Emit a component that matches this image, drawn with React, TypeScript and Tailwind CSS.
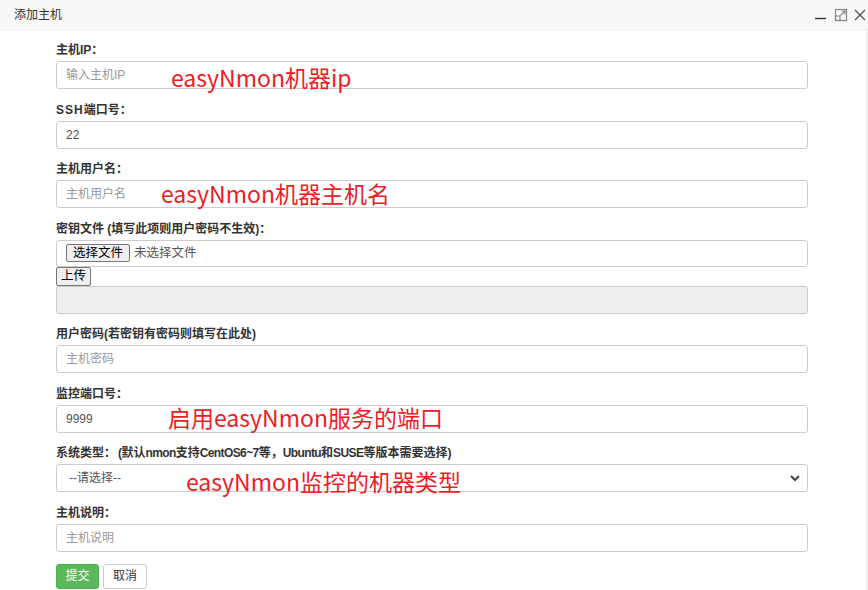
import React from "react";

const font = { fontFamily: '"Liberation Sans", "Noto Sans CJK SC", sans-serif' };
const noteFont = { fontFamily: '"Noto Sans CJK SC", sans-serif' };

function Label({ children }: { children: React.ReactNode }) {
  return (
    <div className="h-[16px] leading-[16px] mb-[3px] text-[12px] font-bold text-[#333] whitespace-nowrap">
      {children}
    </div>
  );
}

function TextInput({ placeholder, value }: { placeholder?: string; value?: string }) {
  return (
    <div className="h-[28px] w-[752px] border border-[#ccc] rounded-[3px] bg-white flex items-center pl-[9px] text-[12px]">
      {value ? (
        <span className="text-[#555]">{value}</span>
      ) : (
        <span className="text-[#999]">{placeholder}</span>
      )}
    </div>
  );
}

function Note({ children, className }: { children: React.ReactNode; className: string }) {
  return (
    <div
      className={"absolute text-[23px] leading-[28px] text-[#ee1c25] whitespace-nowrap pointer-events-none " + className}
      style={noteFont}
    >
      {children}
    </div>
  );
}

export default function App() {
  return (
    <div className="relative w-[868px] h-[590px] bg-white overflow-hidden" style={font}>
      {/* header */}
      <div className="h-[30px] bg-[#f8f8f8] border-b border-[#eee] flex items-center justify-between pl-[14px] pr-[2px]">
        <span className="text-[12px] text-[#333]">添加主机</span>
        <div className="flex items-center">
          <svg width="14" height="14" viewBox="0 0 14 14" className="mr-[6px] mt-[2px]">
            <line x1="1" y1="9.5" x2="12" y2="9.5" stroke="#333" strokeWidth="1.4" />
          </svg>
          <svg width="14" height="14" viewBox="0 0 14 14" className="mr-[6px]">
            <rect x="1.5" y="1.5" width="11" height="11" fill="none" stroke="#888" strokeWidth="1.2" />
            <rect x="1.5" y="8" width="4.5" height="4.5" fill="none" stroke="#888" strokeWidth="1.2" />
            <path d="M6.5 7.5 L11 3 M7.5 3 H11 V6.5" fill="none" stroke="#888" strokeWidth="1.2" />
          </svg>
          <svg width="12" height="14" viewBox="0 0 12 14">
            <path d="M1 2 L11 12 M11 2 L1 12" stroke="#555" strokeWidth="1.4" />
          </svg>
        </div>
      </div>

      {/* right scroll edge */}
      <div className="absolute right-0 top-[30px] bottom-0 w-[2px] bg-[#efefef]" />

      {/* form */}
      <div className="pl-[56px] pt-[12px]">
        <Label>主机IP：</Label>
        <TextInput placeholder="输入主机IP" />

        <div className="mt-[12.5px]">
          <Label>
            <span className="tracking-[1px]">SSH</span>端口号：
          </Label>
          <TextInput value="22" />
        </div>

        <div className="mt-[12.5px]">
          <Label>主机用户名：</Label>
          <TextInput placeholder="主机用户名" />
        </div>

        <div className="mt-[12.5px]">
          <Label>密钥文件 (填写此项则用户密码不生效)：</Label>
          <div className="h-[27px] w-[752px] border border-[#ccc] rounded-[3px] bg-white flex items-center pl-[9px] text-[12px]">
            <span className="h-[18px] px-[6px] border border-[#767676] rounded-[2px] bg-[#efefef] text-[#000] text-[12.5px] leading-[16px] flex items-center">
              选择文件
            </span>
            <span className="ml-[4px] text-[#555] text-[12.5px]">未选择文件</span>
          </div>
          <div className="h-[19px] w-[35px] border border-[#767676] rounded-[2px] bg-[#efefef] text-[12.5px] text-black flex items-center justify-center">
            上传
          </div>
          <div className="h-[28px] w-[752px] border border-[#ccc] rounded-[3px] bg-[#eee]" />
        </div>

        <div className="mt-[12.5px]">
          <Label>用户密码(若密钥有密码则填写在此处)</Label>
          <TextInput placeholder="主机密码" />
        </div>

        <div className="mt-[12.5px]">
          <Label>监控端口号：</Label>
          <TextInput value="9999" />
        </div>

        <div className="mt-[12.5px]">
          <Label>
            系统类型：
            <span className="ml-[2px]">
              <span className="tracking-[-0.6px]">(</span>默认<span className="tracking-[-0.6px]">nmon</span>支持
              <span className="tracking-[-0.6px]">CentOS6~7</span>等，<span className="tracking-[-0.6px]">Ubuntu</span>和
              <span className="tracking-[-0.6px]">SUSE</span>等版本需要选择<span>)</span>
            </span>
          </Label>
          <div className="h-[28px] w-[752px] border border-[#ccc] rounded-[3px] bg-white flex items-center justify-between pl-[12px] pr-[6px] text-[12px]">
            <span className="text-[#555]">--请选择--</span>
            <svg width="12" height="10" viewBox="0 0 12 10">
              <path d="M2 3 L6 7 L10 3" fill="none" stroke="#444" strokeWidth="2" />
            </svg>
          </div>
        </div>

        <div className="mt-[12.5px]">
          <Label>主机说明：</Label>
          <TextInput placeholder="主机说明" />
        </div>

        <div className="mt-[12px] flex gap-[4px]">
          <div className="h-[25px] w-[43px] rounded-[3px] bg-[#5cb85c] border border-[#4cae4c] text-white text-[12px] flex items-center justify-center">
            提交
          </div>
          <div className="h-[25px] w-[44px] rounded-[3px] bg-white border border-[#ccc] text-[#333] text-[12px] flex items-center justify-center">
            取消
          </div>
        </div>
      </div>

      {/* annotations */}
      <Note className="left-[171px] top-[63px]">easyNmon机器ip</Note>
      <Note className="left-[161px] top-[179px]">easyNmon机器主机名</Note>
      <Note className="left-[168px] top-[403px]">启用easyNmon服务的端口</Note>
      <Note className="left-[186px] top-[467px]">easyNmon监控的机器类型</Note>
    </div>
  );
}
